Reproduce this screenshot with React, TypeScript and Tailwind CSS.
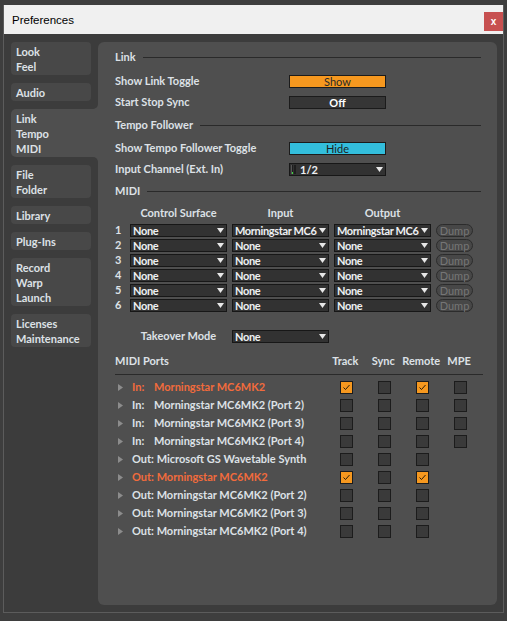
import React from "react";

const tabs = [
    { lines: ["Look", "Feel"] },
    { lines: ["Audio"] },
    { lines: ["Link", "Tempo", "MIDI"], active: true },
    { lines: ["File", "Folder"] },
    { lines: ["Library"] },
    { lines: ["Plug-Ins"] },
    { lines: ["Record", "Warp", "Launch"] },
    { lines: ["Licenses", "Maintenance"] },
];

const midiRows = [
    { n: 1, surface: "None", input: "Morningstar MC6", output: "Morningstar MC6" },
    { n: 2, surface: "None", input: "None", output: "None" },
    { n: 3, surface: "None", input: "None", output: "None" },
    { n: 4, surface: "None", input: "None", output: "None" },
    { n: 5, surface: "None", input: "None", output: "None" },
    { n: 6, surface: "None", input: "None", output: "None" },
];

// boxes: Track, Sync, Remote, MPE ; null = no box
const ports: { dir: string; name: string; hot?: boolean; boxes: (boolean | null)[] }[] = [
    { dir: "In:", name: "Morningstar MC6MK2", hot: true, boxes: [true, false, true, false] },
    { dir: "In:", name: "Morningstar MC6MK2 (Port 2)", boxes: [false, false, false, false] },
    { dir: "In:", name: "Morningstar MC6MK2 (Port 3)", boxes: [false, false, false, false] },
    { dir: "In:", name: "Morningstar MC6MK2 (Port 4)", boxes: [false, false, false, false] },
    { dir: "Out:", name: "Microsoft GS Wavetable Synth", boxes: [false, false, false, null] },
    { dir: "Out:", name: "Morningstar MC6MK2", hot: true, boxes: [true, false, true, null] },
    { dir: "Out:", name: "Morningstar MC6MK2 (Port 2)", boxes: [false, false, false, null] },
    { dir: "Out:", name: "Morningstar MC6MK2 (Port 3)", boxes: [false, false, false, null] },
    { dir: "Out:", name: "Morningstar MC6MK2 (Port 4)", boxes: [false, false, false, null] },
];

function SectionHeader({ title }: { title: string }) {
    return (
        <div className="flex items-center h-[15px] gap-[7px]">
            <span>{title}</span>
            <div className="flex-1 h-px bg-[#2a2a2a]" />
        </div>
    );
}

function Arrow() {
    return (
        <svg width="7" height="5" viewBox="0 0 7 5" className="shrink-0">
            <polygon points="0,0 7,0 3.5,5" fill="#e8e8e8" />
        </svg>
    );
}

function Dropdown({ value }: { value: string }) {
    return (
        <div className="w-[97px] h-[13px] border border-[#171717] bg-[#323232] flex items-center pl-[2px] pr-[2px] text-[#eef0f2]">
            <span className="flex-1 whitespace-nowrap leading-[11px] tracking-[-0.35px]">{value}</span>
            <Arrow />
        </div>
    );
}

function Checkbox({ checked }: { checked: boolean | null }) {
    if (checked === null) return <div className="w-[13px] h-[13px]" />;
    return (
        <div className={`w-[13px] h-[13px] border border-[#1c1c1c] flex items-center justify-center ${checked ? "bg-[#f6981f]" : "bg-[#3a3a3a]"}`}>
            {checked && (
                <svg width="11" height="11" viewBox="0 0 11 11">
                    <path d="M2.5 5.5 L4.5 7.5 L8.5 3" fill="none" stroke="#2b1d08" strokeWidth="1" />
                </svg>
            )}
        </div>
    );
}

export default function App() {
    return (
        <div className="w-[507px] h-[621px] bg-[#3e3e3e] pt-[5px] pl-[3px] overflow-hidden">
            <div className="w-[501px] h-[608px] border border-t-0 border-[#5c5c5c] flex flex-col">
                {/* Title bar */}
                <div className="h-[29px] bg-[#f0f0f0] flex justify-between shrink-0">
                    <span className="pl-[8px] pt-[7px] text-[11.5px] text-black font-['Liberation_Sans',sans-serif]">Preferences</span>
                    <div className="mt-[7px] w-[19px] h-[19px] bg-[#c75050] flex items-center justify-center text-white text-[10px] font-bold font-['Liberation_Sans',sans-serif] leading-none">x</div>
                </div>

                {/* Body */}
                <div className="flex-1 bg-[#3c3c3c] flex pl-[7px] pt-[8px] font-['Lato',sans-serif] font-bold text-[11px] text-[#dde1e6]">
                    <div className="w-[80px] flex flex-col gap-[8px] shrink-0">
                        {tabs.map((t, i) => (
                            <div
                                key={i}
                                className={`pl-[5px] pt-[2px] pb-[1px] leading-[15px] ${t.active ? "relative w-[87px] bg-[#4f4f4f] rounded-l-[5px]" : "bg-[#484848] rounded-[4px]"}`}
                            >
                                {t.lines.map(l => <div key={l}>{l}</div>)}
                                {t.active && (
                                    <>
                                        <div className="absolute right-0 top-[-5px] w-[6px] h-[5px] bg-[#4f4f4f]">
                                            <div className="w-full h-full bg-[#3c3c3c] rounded-br-[5px]" />
                                        </div>
                                        <div className="absolute right-0 bottom-[-5px] w-[6px] h-[5px] bg-[#4f4f4f]">
                                            <div className="w-full h-full bg-[#3c3c3c] rounded-tr-[5px]" />
                                        </div>
                                    </>
                                )}
                            </div>
                        ))}
                    </div>

                    <div className="ml-[7px] w-[399px] h-[563px] bg-[#4f4f4f] rounded-[6px] pl-[17px] pr-[16px] pt-[8px]">
                        <SectionHeader title="Link" />
                        <div className="flex items-center h-[13px] mt-[10px]">
                            <span className="w-[174px]">Show Link Toggle</span>
                            <div className="w-[97px] h-[13px] border border-[#1b1b1b] bg-[#f6981f] text-[#2a2a2a] text-center leading-[11px] font-normal">Show</div>
                        </div>
                        <div className="flex items-center h-[13px] mt-[8px]">
                            <span className="w-[174px]">Start Stop Sync</span>
                            <div className="w-[97px] h-[13px] border border-[#1b1b1b] bg-[#363636] text-white text-center leading-[11px]">Off</div>
                        </div>
                        <div className="mt-[9px]"><SectionHeader title="Tempo Follower" /></div>
                        <div className="flex items-center h-[13px] mt-[9px]">
                            <span className="w-[174px]">Show Tempo Follower Toggle</span>
                            <div className="w-[97px] h-[13px] border border-[#1b1b1b] bg-[#33bedc] text-[#1e1e1e] text-center leading-[11px] font-normal">Hide</div>
                        </div>
                        <div className="flex items-center h-[13px] mt-[8px]">
                            <span className="w-[174px]">Input Channel (Ext. In)</span>
                            <div className="w-[97px] h-[13px] border border-[#171717] bg-[#323232] flex items-center pl-[1px] pr-[2px] text-[#eef0f2]">
                                <div className="flex gap-px h-[9px] mr-[4px]">
                                    <div className="w-[2px] h-[9px] bg-[#1e1e1e] border-l border-[#555] flex flex-col justify-end"><div className="h-[2px] bg-[#3ddc3d]" /></div>
                                    <div className="w-[2px] h-[9px] bg-[#1e1e1e]" />
                                </div>
                                <span className="flex-1 leading-[11px]">1/2</span>
                                <Arrow />
                            </div>
                        </div>
                        <div className="mt-[8px]"><SectionHeader title="MIDI" /></div>

                        {/* MIDI devices */}
                        <div className="flex h-[15px] items-center mt-[7px] pl-[15px]">
                            <span className="w-[97px] text-center">Control Surface</span>
                            <span className="w-[97px] ml-[5px] text-center">Input</span>
                            <span className="w-[97px] ml-[5px] text-center">Output</span>
                        </div>
                        <div className="flex flex-col gap-[2px] mt-[3px]">
                            {midiRows.map(r => (
                                <div key={r.n} className="flex items-center h-[13px]">
                                    <span className="w-[15px]">{r.n}</span>
                                    <Dropdown value={r.surface} />
                                    <div className="ml-[5px]"><Dropdown value={r.input} /></div>
                                    <div className="ml-[5px]"><Dropdown value={r.output} /></div>
                                    <div className="ml-[5px] w-[37px] h-[13px] rounded-full border border-[#2c2c2c] bg-[#474747] text-[#767676] font-normal text-center leading-[11px]">Dump</div>
                                </div>
                            ))}
                        </div>
                        <div className="flex items-center h-[13px] mt-[18px] pl-[15px]">
                            <span className="w-[97px] text-center">Takeover Mode</span>
                            <div className="ml-[5px]"><Dropdown value="None" /></div>
                        </div>

                        {/* MIDI Ports */}
                        <div className="flex items-center h-[15px] mt-[11px] pr-[3px]">
                            <span className="w-[212px]">MIDI Ports</span>
                            <span className="w-[38px] text-center">Track</span>
                            <span className="w-[38px] text-center">Sync</span>
                            <span className="w-[38px] text-center">Remote</span>
                            <span className="w-[38px] text-center">MPE</span>
                        </div>
                        <div className="h-px bg-[#2a2a2a] mt-[5px] mr-[-2px]" />
                        <div className="flex flex-col mt-[3px]">
                            {ports.map((p, i) => (
                                <div key={i} className="flex items-center h-[18px]">
                                    <div className="w-[212px] flex items-center">
                                        <svg width="5" height="7" viewBox="0 0 5 7" className="ml-[3px] mr-[9px] shrink-0">
                                            <polygon points="0,0 5,3.5 0,7" fill="#8c8c8c" />
                                        </svg>
                                        <span className={`whitespace-nowrap ${p.hot ? "text-[#f26b3c]" : ""}`}>
                                            {p.dir === "In:" ? (
                                                <>
                                                    <span className="inline-block w-[22px]">In:</span>
                                                    {p.name}
                                                </>
                                            ) : (
                                                <>Out: {p.name}</>
                                            )}
                                        </span>
                                    </div>
                                    {p.boxes.map((b, j) => (
                                        <div key={j} className="w-[38px] flex justify-center">
                                            <Checkbox checked={b} />
                                        </div>
                                    ))}
                                </div>
                            ))}
                        </div>
                    </div>
                </div>
            </div>
        </div>
    );
}
